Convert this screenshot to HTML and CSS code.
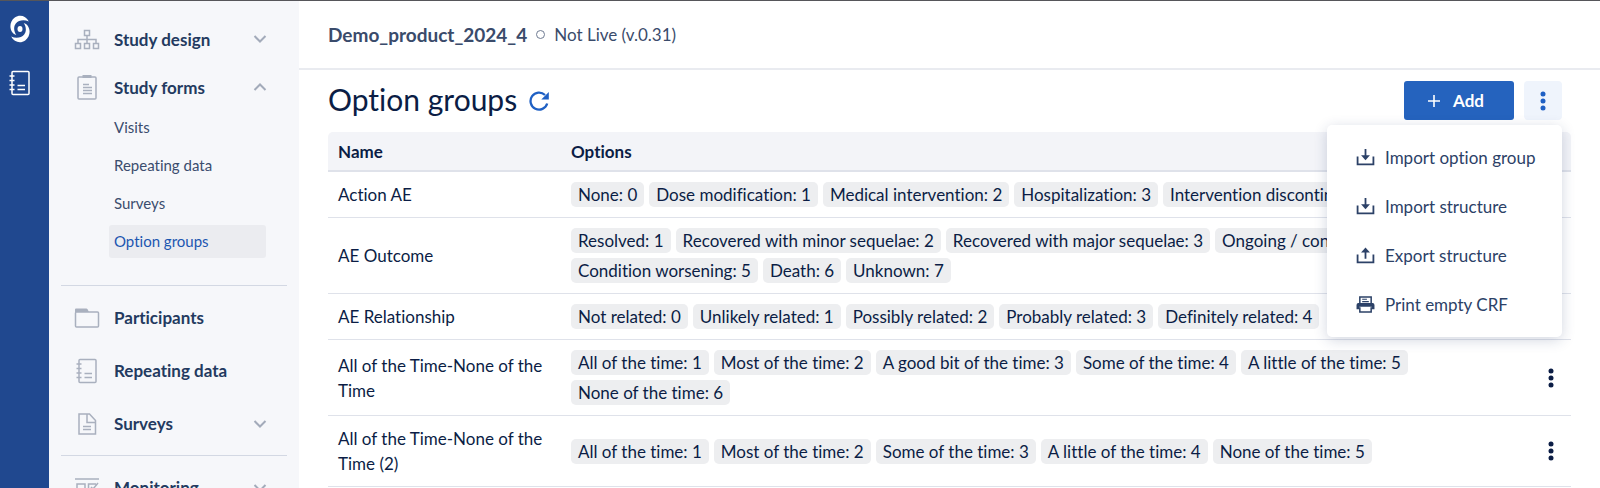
FILE: index.html
```html
<!DOCTYPE html>
<html lang="en">
<head>
    <meta charset="UTF-8">
    <meta name="viewport" content="width=device-width, initial-scale=1.0">
    <title>Option groups</title>
    <link rel="stylesheet" href="styles.css">
</head>
<body>
    <svg class="sprite" aria-hidden="true">
        <symbol id="icon-down" viewBox="0 0 14 10"><path d="M1.500 2l5.500 5.500L12.500 2" fill="none" stroke="currentColor" stroke-width="2"/></symbol>
        <symbol id="icon-up" viewBox="0 0 14 10"><path d="M1.500 8L7 2.500 12.500 8" fill="none" stroke="currentColor" stroke-width="2"/></symbol>
        <symbol id="icon-notebook" viewBox="0 0 24 26">
            <rect x="4" y="1.500" width="17" height="23" rx="1" fill="none" stroke="currentColor" stroke-width="1.500"/>
            <path d="M1.500 6h5M1.500 10.500h5M1.500 15h5M1.500 19.500h5M9.500 15.500h7.500M9.500 19.500h7.500" stroke="currentColor" stroke-width="1.500"/>
        </symbol>
        <symbol id="icon-kebab" viewBox="0 0 6 20"><circle cx="3" cy="3" r="2.500"/><circle cx="3" cy="10" r="2.500"/><circle cx="3" cy="17" r="2.500"/></symbol>
        <symbol id="icon-import" viewBox="0 0 18 16"><path d="M1.500 7v7.500h15V7M9 0v8" fill="none" stroke="currentColor" stroke-width="1.700"/><path d="M4.800 5.800h8.400L9 10.500z"/></symbol>
        <symbol id="icon-export" viewBox="0 0 18 16"><path d="M1.500 7v7.500h15V7M9 11V3" fill="none" stroke="currentColor" stroke-width="1.700"/><path d="M4.800 5.200h8.400L9 .5z"/></symbol>
    </svg>

    <div class="app">
        <div class="rail">
            <a href="#" aria-label="Home">
                <svg width="22" height="28" viewBox="0 0 22 28">
                    <path id="swoosh" d="M19.800 6.500C17 .8 10.500 -.8 5.800 2.600 .8 6.300 .2 12.800 3.300 17.200 4.300 18.600 5.600 19.500 7.300 20 4.800 16.500 4.300 11.800 6.800 8.600 9.700 5 15 4.400 19.800 6.500z"/>
                    <use href="#swoosh" transform="rotate(180 11 14)"/>
                    <ellipse cx="11" cy="14" rx="2.500" ry="3"/>
                </svg>
            </a>
            <a href="#" aria-label="Studies"><svg width="24" height="26"><use href="#icon-notebook"/></svg></a>
        </div>

        <nav class="sidebar">
            <div class="group">
                <a class="item item-small" href="#">
                    <svg class="item-icon" viewBox="0 0 26 26" fill="none" stroke="currentColor" stroke-width="1.500"><path d="M10.500 4.500h5v5h-5zM1.500 17.500h5v5h-5zM10.500 17.500h5v5h-5zM19.500 17.500h5v5h-5zM13 9.500v8M4 17.500v-4h18v4"/></svg>
                    <span>Study design</span>
                    <svg class="chevron"><use href="#icon-down"/></svg>
                </a>
                <a class="item item-small" href="#">
                    <svg class="item-icon" viewBox="0 0 26 26" fill="none" stroke="currentColor" stroke-width="1.500"><rect x="4" y="3" width="18" height="22" rx="1"/><path d="M8.500 2.500h9" stroke-width="3"/><path d="M9 10.500h6M9 13.500h9M9 16.500h9M9 19.500h9"/></svg>
                    <span>Study forms</span>
                    <svg class="chevron"><use href="#icon-up"/></svg>
                </a>
                <div class="subnav">
                    <a href="#">Visits</a>
                    <a href="#">Repeating data</a>
                    <a href="#">Surveys</a>
                    <a class="active" href="#">Option groups</a>
                </div>
            </div>
            <div class="group">
                <a class="item" href="#">
                    <svg class="item-icon" viewBox="0 0 26 26" fill="none" stroke="currentColor" stroke-width="1.500"><rect x="1.500" y="7" width="23" height="15" rx="1"/><path d="M1 4.500q0-1 1-1h10.500q1 0 1.500 1.500l.8 2H1z" fill="currentColor" stroke="none"/></svg>
                    <span>Participants</span>
                </a>
                <a class="item" href="#">
                    <svg class="item-icon" viewBox="0 0 24 26"><use href="#icon-notebook"/></svg>
                    <span>Repeating data</span>
                </a>
                <a class="item" href="#">
                    <svg class="item-icon" viewBox="0 0 26 26" fill="none" stroke="currentColor" stroke-width="1.500"><path d="M5 3h10.500l6 6.500V23H5zM13 3v8.500h8.500M9 15.500h8M9 18.500h8"/></svg>
                    <span>Surveys</span>
                    <svg class="chevron"><use href="#icon-down"/></svg>
                </a>
            </div>
            <div class="group">
                <a class="item" href="#">
                    <svg class="item-icon" viewBox="0 0 26 26" fill="none" stroke="currentColor" stroke-width="1.500"><path d="M1 4h24"/><path d="M3 9h8v8H3zM22 9h-7.500v8H22v-4M17 12l2 2 5-6"/></svg>
                    <span>Monitoring</span>
                    <svg class="chevron"><use href="#icon-down"/></svg>
                </a>
            </div>
        </nav>

        <main class="main">
            <header class="study-bar">
                <strong>Demo_product_2024_4</strong>
                <span class="status-dot"></span>
                <span>Not Live (v.0.31)</span>
            </header>

            <div class="content">
                <div class="title-row">
                    <h1>Option groups</h1>
                    <button class="refresh" aria-label="Refresh">
                        <svg width="20" height="20" viewBox="0 0 20 20"><path d="M18.200 12.500A8.500 8.500 0 1 1 16 4" fill="none" stroke="currentColor" stroke-width="2.300"/><path d="M19.800 1v7.500h-7.500z" fill="currentColor"/></svg>
                    </button>
                    <div class="actions">
                        <button class="add">
                            <svg width="12" height="12" viewBox="0 0 12 12"><path d="M6 0v12M0 6h12" stroke="currentColor" stroke-width="1.600"/></svg>
                            Add
                        </button>
                        <button class="more" aria-label="More actions"><svg width="6" height="20"><use href="#icon-kebab"/></svg></button>
                        <div class="menu">
                            <button><svg class="menu-icon" viewBox="0 0 18 16"><use href="#icon-import"/></svg>Import option group</button>
                            <button><svg class="menu-icon" viewBox="0 0 18 16"><use href="#icon-import"/></svg>Import structure</button>
                            <button><svg class="menu-icon" viewBox="0 0 18 16"><use href="#icon-export"/></svg>Export structure</button>
                            <button><svg class="menu-icon" viewBox="0 0 20 18"><path d="M4 8V1h12v7" fill="none" stroke="currentColor" stroke-width="1.600"/><path d="M6.500 3.500h5M6.500 6h7" stroke="currentColor" stroke-width="1.200"/><path d="M2.500 7.500h15q2 0 2 2V14h-3v-2.500h-13V14h-3V9.500q0-2 2-2z"/><path d="M4 12v5h12v-5" fill="none" stroke="currentColor" stroke-width="1.600"/></svg>Print empty CRF</button>
                        </div>
                    </div>
                </div>

                <table>
                    <thead>
                        <tr>
                            <th class="col-name">Name</th>
                            <th>Options</th>
                            <th class="col-more"></th>
                        </tr>
                    </thead>
                    <tbody>
                        <tr>
                            <td>Action AE</td>
                            <td><div class="tags"><span>None: 0</span><span>Dose modification: 1</span><span>Medical intervention: 2</span><span>Hospitalization: 3</span><span>Intervention discontinued: 4</span></div></td>
                            <td><button class="row-more" aria-label="Row actions"><svg width="6" height="20"><use href="#icon-kebab"/></svg></button></td>
                        </tr>
                        <tr>
                            <td>AE Outcome</td>
                            <td><div class="tags"><span>Resolved: 1</span><span>Recovered with minor sequelae: 2</span><span>Recovered with major sequelae: 3</span><span>Ongoing / continuing: 4</span><span>Condition worsening: 5</span><span>Death: 6</span><span>Unknown: 7</span></div></td>
                            <td><button class="row-more" aria-label="Row actions"><svg width="6" height="20"><use href="#icon-kebab"/></svg></button></td>
                        </tr>
                        <tr>
                            <td>AE Relationship</td>
                            <td><div class="tags"><span>Not related: 0</span><span>Unlikely related: 1</span><span>Possibly related: 2</span><span>Probably related: 3</span><span>Definitely related: 4</span></div></td>
                            <td><button class="row-more" aria-label="Row actions"><svg width="6" height="20"><use href="#icon-kebab"/></svg></button></td>
                        </tr>
                        <tr>
                            <td>All of the Time-None of the Time</td>
                            <td><div class="tags"><span>All of the time: 1</span><span>Most of the time: 2</span><span>A good bit of the time: 3</span><span>Some of the time: 4</span><span>A little of the time: 5</span><span>None of the time: 6</span></div></td>
                            <td><button class="row-more" aria-label="Row actions"><svg width="6" height="20"><use href="#icon-kebab"/></svg></button></td>
                        </tr>
                        <tr>
                            <td>All of the Time-None of the Time (2)</td>
                            <td><div class="tags"><span>All of the time: 1</span><span>Most of the time: 2</span><span>Some of the time: 3</span><span>A little of the time: 4</span><span>None of the time: 5</span></div></td>
                            <td><button class="row-more" aria-label="Row actions"><svg width="6" height="20"><use href="#icon-kebab"/></svg></button></td>
                        </tr>
                    </tbody>
                </table>
            </div>
        </main>
    </div>
</body>
</html>
```
FILE: styles.css
```css
* {
    box-sizing: border-box;
}

body {
    margin: 0;
    font-family: Lato, sans-serif;
    font-size: 17px;
    line-height: 25px;
    font-variant-ligatures: none;
    color: #0b1d45;
    background-color: #ffffff;
}

a {
    color: inherit;
    text-decoration: none;
}

button {
    font: inherit;
    font-variant-ligatures: none;
    color: inherit;
    border: none;
    padding: 0;
    background: none;
    cursor: pointer;
}

svg {
    display: block;
    flex-shrink: 0;
    fill: currentColor;
}

svg[fill="none"] {
    fill: none;
}

.sprite {
    display: none;
}

.app {
    display: flex;
    height: 100vh;
    overflow: hidden;
    border-top: 1px solid #56565a;
}

/* Left rail */
.rail {
    width: 49px;
    flex-shrink: 0;
    display: flex;
    flex-direction: column;
    align-items: center;
    gap: 27px;
    padding: 14px 9px 0 0;
    background-color: #20488f;
    color: #ffffff;
}

/* Sidebar */
.sidebar {
    width: 250px;
    flex-shrink: 0;
    overflow: hidden;
    padding: 14px 12px 0;
    background-color: #f6f7fa;
}

.group {
    padding-bottom: 5px;
    border-bottom: 1px solid #d3d8e3;
}

.group + .group {
    padding-top: 5px;
}

.group:last-child {
    border-bottom: none;
}

.item {
    display: flex;
    align-items: center;
    gap: 14px;
    height: 53px;
    padding: 0 20px 0 13px;
    font-weight: bold;
    color: #233a60;
}

.item-small {
    height: 48px;
}

.item-icon {
    width: 26px;
    height: 26px;
    color: #a9b0be;
}

.chevron {
    width: 14px;
    height: 10px;
    margin-left: auto;
    color: #a3abba;
}

.subnav {
    display: flex;
    flex-direction: column;
    gap: 5px;
    padding: 0 21px 22px 48px;
    font-size: 15px;
    color: #3b4d6e;
}

.subnav a {
    padding: 4px 5px;
    border-radius: 3px;
}

.subnav .active {
    background-color: #ebecf0;
    color: #1c56b0;
}

/* Main area */
.main {
    flex: 1;
    min-width: 0;
}

.study-bar {
    display: flex;
    align-items: center;
    gap: 9px;
    height: 69px;
    padding: 0 29px;
    border-bottom: 2px solid #e9ebf0;
    color: #3a4b6b;
}

.study-bar strong {
    font-size: 19px;
}

.status-dot {
    width: 9px;
    height: 9px;
    border: 1px solid #6f7b92;
    border-radius: 50%;
}

.content {
    padding: 11px 29px 0;
}

.title-row {
    display: flex;
    align-items: center;
    gap: 12px;
    margin-bottom: 12px;
}

h1 {
    margin: 0;
    padding-bottom: 3px;
    font-size: 30px;
    line-height: 36px;
    font-weight: normal;
}

.refresh {
    color: #1f60c4;
}

.actions {
    position: relative;
    display: flex;
    gap: 10px;
    margin-left: auto;
    padding-right: 9px;
}

.add {
    display: flex;
    align-items: center;
    gap: 13px;
    width: 110px;
    height: 39px;
    padding-left: 24px;
    border-radius: 3px;
    background-color: #2563be;
    color: #ffffff;
    font-weight: bold;
}

.more {
    display: flex;
    align-items: center;
    justify-content: center;
    width: 38px;
    height: 39px;
    border-radius: 4px;
    background-color: #eff4fc;
    color: #1f60c4;
}

.menu {
    position: absolute;
    top: 44px;
    right: 9px;
    width: 235px;
    padding: 8px 0;
    border-radius: 5px;
    background-color: #ffffff;
    box-shadow: 0 3px 14px rgba(30, 50, 100, 0.2);
}

.menu button {
    display: flex;
    align-items: center;
    gap: 10px;
    width: 100%;
    height: 49px;
    padding: 0 29px;
    color: #2c4167;
    white-space: nowrap;
}

.menu-icon {
    width: 19px;
    height: 17px;
}

/* Option groups table */
table {
    width: 100%;
    border-collapse: separate;
    border-spacing: 0;
    table-layout: fixed;
}

th {
    height: 40px;
    padding: 0 10px;
    text-align: left;
    background-color: #f3f4f8;
    border-bottom: 2px solid #dfe2ea;
}

th:first-child {
    border-top-left-radius: 5px;
}

th:last-child {
    border-top-right-radius: 5px;
}

td {
    padding: 10px;
    border-bottom: 1px solid #dfe2ea;
    vertical-align: middle;
}

th:nth-child(2),
td:nth-child(2) {
    padding-left: 0;
}

.col-name {
    width: 243px;
}

.col-more {
    width: 40px;
}

.tags {
    display: flex;
    flex-wrap: wrap;
    gap: 5px;
}

.tags span {
    padding: 0 7px;
    border-radius: 5px;
    background-color: #edeef0;
}

.row-more {
    display: flex;
    justify-content: center;
    width: 100%;
}
```
